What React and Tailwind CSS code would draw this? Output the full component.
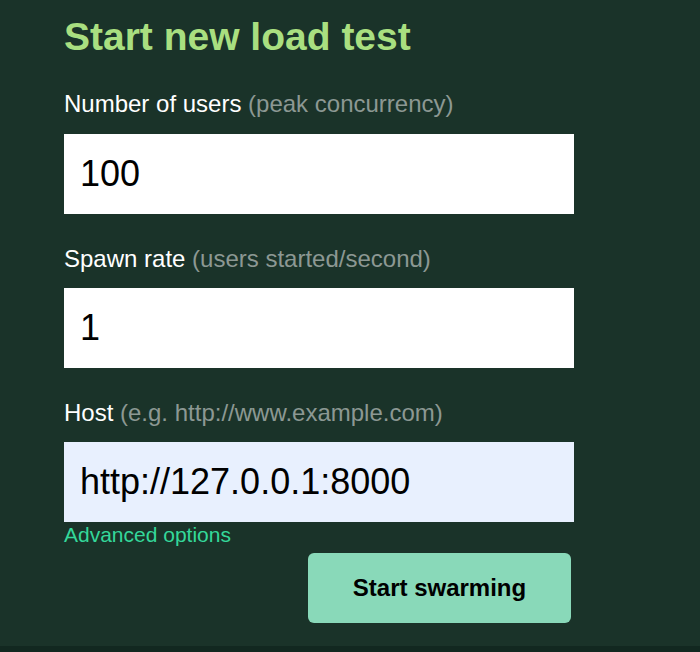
export default function App() {
  return (
    <div className="min-h-[652px] bg-[#122820] font-['Liberation_Sans',Arial,sans-serif]">
      <div className="h-[646px] bg-[#1a3329] pl-16 pt-[15px]">
        <h1 className="text-[39px] leading-[44px] font-bold text-[#a9df80]">Start new load test</h1>

        <form className="w-[510px]" onSubmit={(e) => e.preventDefault()}>
          <label className="block mt-[30px] text-[24px] leading-[30px] text-white">
            Number of users <span className="text-[#8c9893]">(peak concurrency)</span>
          </label>
          <input
            defaultValue="100"
            className="mt-[15px] block w-full h-20 bg-white px-4 text-[36px] text-black outline-none"
          />

          <label className="block mt-[30px] text-[24px] leading-[30px] text-white">
            Spawn rate <span className="text-[#8c9893]">(users started/second)</span>
          </label>
          <input
            defaultValue="1"
            className="mt-[14px] block w-full h-20 bg-white px-4 text-[36px] text-black outline-none"
          />

          <label className="block mt-[30px] text-[24px] leading-[30px] text-white">
            Host <span className="text-[#8c9893]">(e.g. http://www.example.com)</span>
          </label>
          <input
            defaultValue="http://127.0.0.1:8000"
            className="mt-[14px] block w-full h-20 bg-[#e8f0fe] px-4 text-[36px] text-black outline-none"
          />

          <a href="#" className="block mt-[2px] text-[21px] leading-[22px] text-[#34d89a]">
            Advanced options
          </a>

          <div className="flex justify-end pr-[3px] mt-[7px]">
            <button className="w-[263px] h-[70px] rounded-md bg-[#89d9b9] text-[24px] font-bold text-black">
              Start swarming
            </button>
          </div>
        </form>
      </div>
    </div>
  );
}
